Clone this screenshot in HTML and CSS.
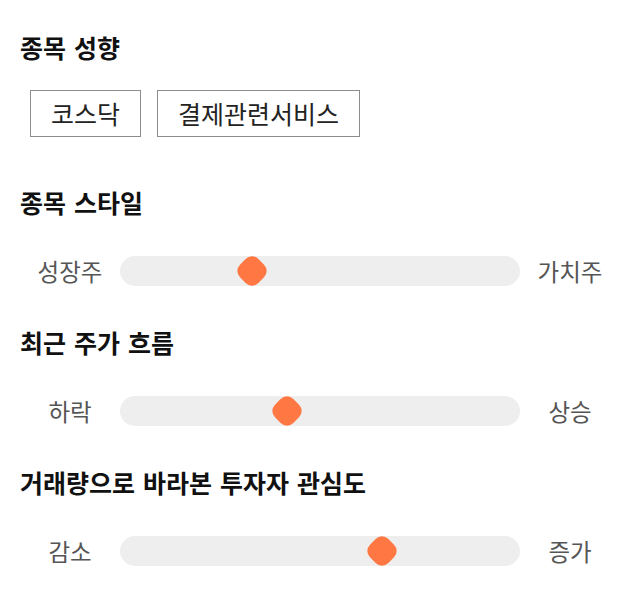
FILE: index.html
```html
<!DOCTYPE html>
<html lang="ko">
<head>
<meta charset="utf-8">
<link rel="stylesheet" href="styles.css">
</head>
<body>
<main class="page">
  <section class="section section-first">
    <h2 class="title">종목 성향</h2>
    <div class="chips">
      <span class="chip">코스닥</span>
      <span class="chip">결제관련서비스</span>
    </div>
  </section>
  <section class="section section-after-chips">
    <h2 class="title">종목 스타일</h2>
    <div class="slider-row">
      <span class="label">성장주</span>
      <div class="track"><span class="thumb" style="left: 33%"></span></div>
      <span class="label">가치주</span>
    </div>
  </section>
  <section class="section">
    <h2 class="title">최근 주가 흐름</h2>
    <div class="slider-row">
      <span class="label">하락</span>
      <div class="track"><span class="thumb" style="left: 41.75%"></span></div>
      <span class="label">상승</span>
    </div>
  </section>
  <section class="section">
    <h2 class="title">거래량으로 바라본 투자자 관심도</h2>
    <div class="slider-row">
      <span class="label">감소</span>
      <div class="track"><span class="thumb" style="left: 65.5%"></span></div>
      <span class="label">증가</span>
    </div>
  </section>
</main>
</body>
</html>
```
FILE: styles.css
```css
html, body {
  margin: 0;
  padding: 0;
  background: #ffffff;
}
body {
  font-family: "Noto Sans CJK KR", "Noto Sans", sans-serif;
  color: #111;
}
.page {
  padding: 31px 20px 0 20px;
  width: 600px;
}
.section {
  margin-top: 40px;
}
.section-first {
  margin-top: 0;
}
.section-after-chips {
  margin-top: 49px;
}
.title {
  margin: 0 0 38px 0;
  font-size: 25px;
  line-height: 32px;
  font-weight: 700;
  color: #111;
  word-spacing: 1px;
}
.section-first .title {
  margin-bottom: 27px;
}
.chips {
  display: flex;
  gap: 16px;
  padding-left: 10px;
}
.chip {
  display: inline-block;
  border: 1px solid #8c8c8c;
  padding: 6px 20px;
  font-size: 25px;
  line-height: 33px;
  color: #222;
}
.slider-row {
  display: flex;
  align-items: center;
  height: 30px;
}
.label {
  width: 100px;
  text-align: center;
  font-size: 23.5px;
  line-height: 30px;
  color: #555;
}
.track {
  flex: 1;
  position: relative;
  height: 30px;
  background: #eeeeee;
  border-radius: 15px;
}
.thumb {
  position: absolute;
  top: 2px;
  width: 26px;
  height: 26px;
  margin-left: -13px;
  background: #ff7843;
  border-radius: 9px;
  transform: rotate(45deg);
}
```
